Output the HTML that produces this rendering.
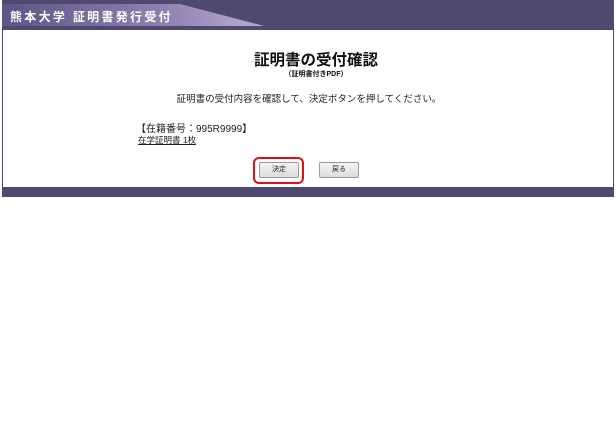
<!DOCTYPE html>
<html><head><meta charset="utf-8"><style>
body{margin:0;width:616px;height:430px;background:#fff;font-family:"Liberation Sans","Noto Sans CJK JP",sans-serif;position:relative;overflow:hidden}
.abs{position:absolute}
.hdr{left:2px;top:0;width:612px;height:30px;background:#4f4870}
.frame{left:2px;top:30px;width:610px;height:157px;border-left:1px solid #4f4870;border-right:1px solid #4f4870}
.foot{left:2px;top:187px;width:612px;height:10px;background:#4f4870}
.btn{top:162px;width:38px;height:14px;border:1px solid #999;border-radius:2px;background:linear-gradient(#f4f4f4,#dcdcdc);font-size:7px;text-align:center;line-height:14px;color:#222}
</style></head><body>
<div class="abs hdr"></div>
<svg class="abs" style="left:2px;top:0" width="270" height="30">
<defs><linearGradient id="g" x1="0" x2="1"><stop offset="0" stop-color="#5d5585"/><stop offset="0.6" stop-color="#8e7fb0"/><stop offset="1" stop-color="#b8acd2"/></linearGradient></defs>
<polygon points="0,4 178,4 262,26 0,26" fill="url(#g)"/>
</svg>
<div class="abs" style="left:10px;top:8px;color:#fff;font-size:12px;font-weight:bold;letter-spacing:2.3px">熊本大学 証明書発行受付</div>
<div class="abs frame"></div>
<div class="abs foot"></div>
<div class="abs" style="left:0;width:632px;top:48px;text-align:center;font-size:15.5px;font-weight:bold;color:#111">証明書の受付確認</div>
<div class="abs" style="left:0;width:632px;top:69px;text-align:center;font-size:7px;font-weight:bold;color:#111">（証明書付きPDF）</div>
<div class="abs" style="left:0;width:618px;top:91px;text-align:center;font-size:9.5px;color:#222">証明書の受付内容を確認して、決定ボタンを押してください。</div>
<div class="abs" style="left:136px;top:120px;font-size:10px;color:#222">【在籍番号：995R9999】</div>
<div class="abs" style="left:138px;top:134px;font-size:8.5px;color:#222;text-decoration:underline">在学証明書 1枚</div>
<div class="abs btn" style="left:259px">決定</div>
<div class="abs btn" style="left:319px">戻る</div>
<div class="abs" style="left:253px;top:157px;width:47px;height:23px;border:2px solid #e01010;border-radius:6px"></div>
</body></html>
